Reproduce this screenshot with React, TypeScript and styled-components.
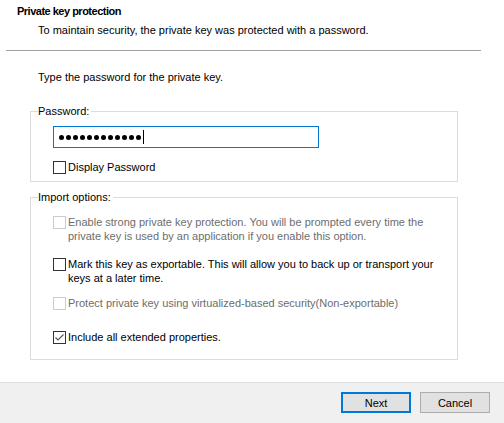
import React from 'react'
import styled, { createGlobalStyle } from 'styled-components'

const GlobalStyle = createGlobalStyle`
    html, body {
        margin: 0;
        padding: 0;
        background: #ffffff;
    }
    body {
        font-family: "Liberation Sans", "Noto Sans", sans-serif;
        font-size: 11px;
        color: #000000;
    }
`;

type Option = {
    lines: string[];
    checked?: boolean;
    disabled?: boolean;
    top: number;
}

const options: Option[] = [
    {
        lines: [
            'Enable strong private key protection. You will be prompted every time the',
            'private key is used by an application if you enable this option.',
        ],
        disabled: true,
        top: 0,
    },
    {
        lines: [
            'Mark this key as exportable. This will allow you to back up or transport your',
            'keys at a later time.',
        ],
        top: 14,
    },
    {
        lines: ['Protect private key using virtualized-based security(Non-exportable)'],
        disabled: true,
        top: 11,
    },
    {
        lines: ['Include all extended properties.'],
        checked: true,
        top: 20,
    },
]

const CheckBox: React.FC<{ checked?: boolean; disabled?: boolean }> = ({ checked, disabled }) => (
    <Box $disabled={disabled}>
        {checked && (
            <svg width="11" height="11" viewBox="0 0 11 11">
                <path d="M1.5 5.5 L4 8 L9.5 2.5" fill="none" stroke="#555" strokeWidth="1.1" />
            </svg>
        )}
    </Box>
)

const App: React.FC<{}> = () => {
    return (
        <>
            <GlobalStyle />
            <Wizard>
                <Header>
                    <Title>Private key protection</Title>
                    <Subtitle>To maintain security, the private key was protected with a password.</Subtitle>
                </Header>
                <Separator />
                <Body>
                    <Instruction>Type the password for the private key.</Instruction>

                    <PasswordGroup>
                        <Legend>Password:</Legend>
                        <PasswordField>
                            {Array.from({ length: 12 }).map((_, i) => <Dot key={i} />)}
                            <Caret />
                        </PasswordField>
                        <CheckRow $top={12}>
                            <CheckBox />
                            <CheckText>Display Password</CheckText>
                        </CheckRow>
                    </PasswordGroup>

                    <ImportGroup>
                        <Legend>Import options:</Legend>
                        {options.map((o, i) => (
                            <CheckRow key={i} $top={o.top}>
                                <CheckBox checked={o.checked} disabled={o.disabled} />
                                <CheckText $disabled={o.disabled}>
                                    {o.lines.map((l, j) => <Line key={j}>{l}</Line>)}
                                </CheckText>
                            </CheckRow>
                        ))}
                    </ImportGroup>
                </Body>
                <Footer>
                    <Button $primary>Next</Button>
                    <Button>Cancel</Button>
                </Footer>
            </Wizard>
        </>
    )
}

const Wizard = styled.div`
    width: 504px;
    height: 423px;
    display: flex;
    flex-direction: column;
    background: #ffffff;
    overflow: hidden;
`;
const Header = styled.div`
    padding: 4px 0 0 17px;
    display: flex;
    flex-direction: column;
`;
const Title = styled.div`
    font-weight: bold;
    letter-spacing: -0.5px;
    line-height: 14px;
`;
const Subtitle = styled.div`
    line-height: 14px;
    margin: 5px 0 0 21px;
`;
const Separator = styled.div`
    height: 1px;
    width: 475px;
    margin: 13px 0 0 6px;
    background: #a0a0a0;
`;
const Body = styled.div`
    padding-left: 30px;
    display: flex;
    flex-direction: column;
`;
const Instruction = styled.div`
    line-height: 14px;
    margin: 19px 0 0 8px;
`;
const Group = styled.fieldset`
    box-sizing: border-box;
    width: 428px;
    margin: 0;
    border: 1px solid #dcdcdc;
    padding: 0 10px 0 22px;
    display: flex;
    flex-direction: column;
`;
const PasswordGroup = styled(Group)`
    margin-top: 20px;
    padding-top: 8px;
    padding-bottom: 7px;
`;
const ImportGroup = styled(Group)`
    margin-top: 8px;
    padding-top: 11px;
    padding-bottom: 15px;
`;
const Legend = styled.legend`
    line-height: 14px;
    padding: 0 2px 0 0;
    margin-left: -15px;
`;
const PasswordField = styled.div`
    box-sizing: border-box;
    width: 266px;
    height: 22px;
    border: 1px solid #0078d7;
    display: flex;
    align-items: center;
    padding-left: 5px;
`;
const Dot = styled.span`
    width: 5px;
    height: 5px;
    border-radius: 50%;
    background: #000000;
    margin-right: 2px;
`;
const Caret = styled.span`
    width: 1px;
    height: 14px;
    background: #000000;
`;
const CheckRow = styled.div<{ $top: number }>`
    display: flex;
    align-items: flex-start;
    margin-top: ${({ $top }) => $top}px;
`;
const Box = styled.span<{ $disabled?: boolean }>`
    box-sizing: border-box;
    flex: none;
    width: 13px;
    height: 13px;
    margin-top: 1px;
    border: 1px solid ${({ $disabled }) => ($disabled ? '#cccccc' : '#333333')};
    background: #ffffff;
    display: flex;
    align-items: center;
    justify-content: center;
`;
const CheckText = styled.span<{ $disabled?: boolean }>`
    line-height: 14px;
    margin-left: 2px;
    color: ${({ $disabled }) => ($disabled ? '#6d6d6d' : '#000000')};
    display: flex;
    flex-direction: column;
    white-space: nowrap;
`;
const Line = styled.span``;
const Footer = styled.div`
    margin-top: auto;
    height: 41px;
    box-sizing: border-box;
    border-top: 1px solid #dfdfdf;
    background: #f0f0f0;
    display: flex;
    justify-content: flex-end;
    align-items: flex-start;
    gap: 9px;
    padding: 9px 14px 0 0;
`;
const Button = styled.button<{ $primary?: boolean }>`
    box-sizing: border-box;
    width: 70px;
    height: 21px;
    padding: 0;
    font-family: inherit;
    font-size: 11px;
    color: #000000;
    background: #e1e1e1;
    border: ${({ $primary }) => ($primary ? '2px solid #0078d7' : '1px solid #adadad')};
    border-radius: 0;
`;

export default App
